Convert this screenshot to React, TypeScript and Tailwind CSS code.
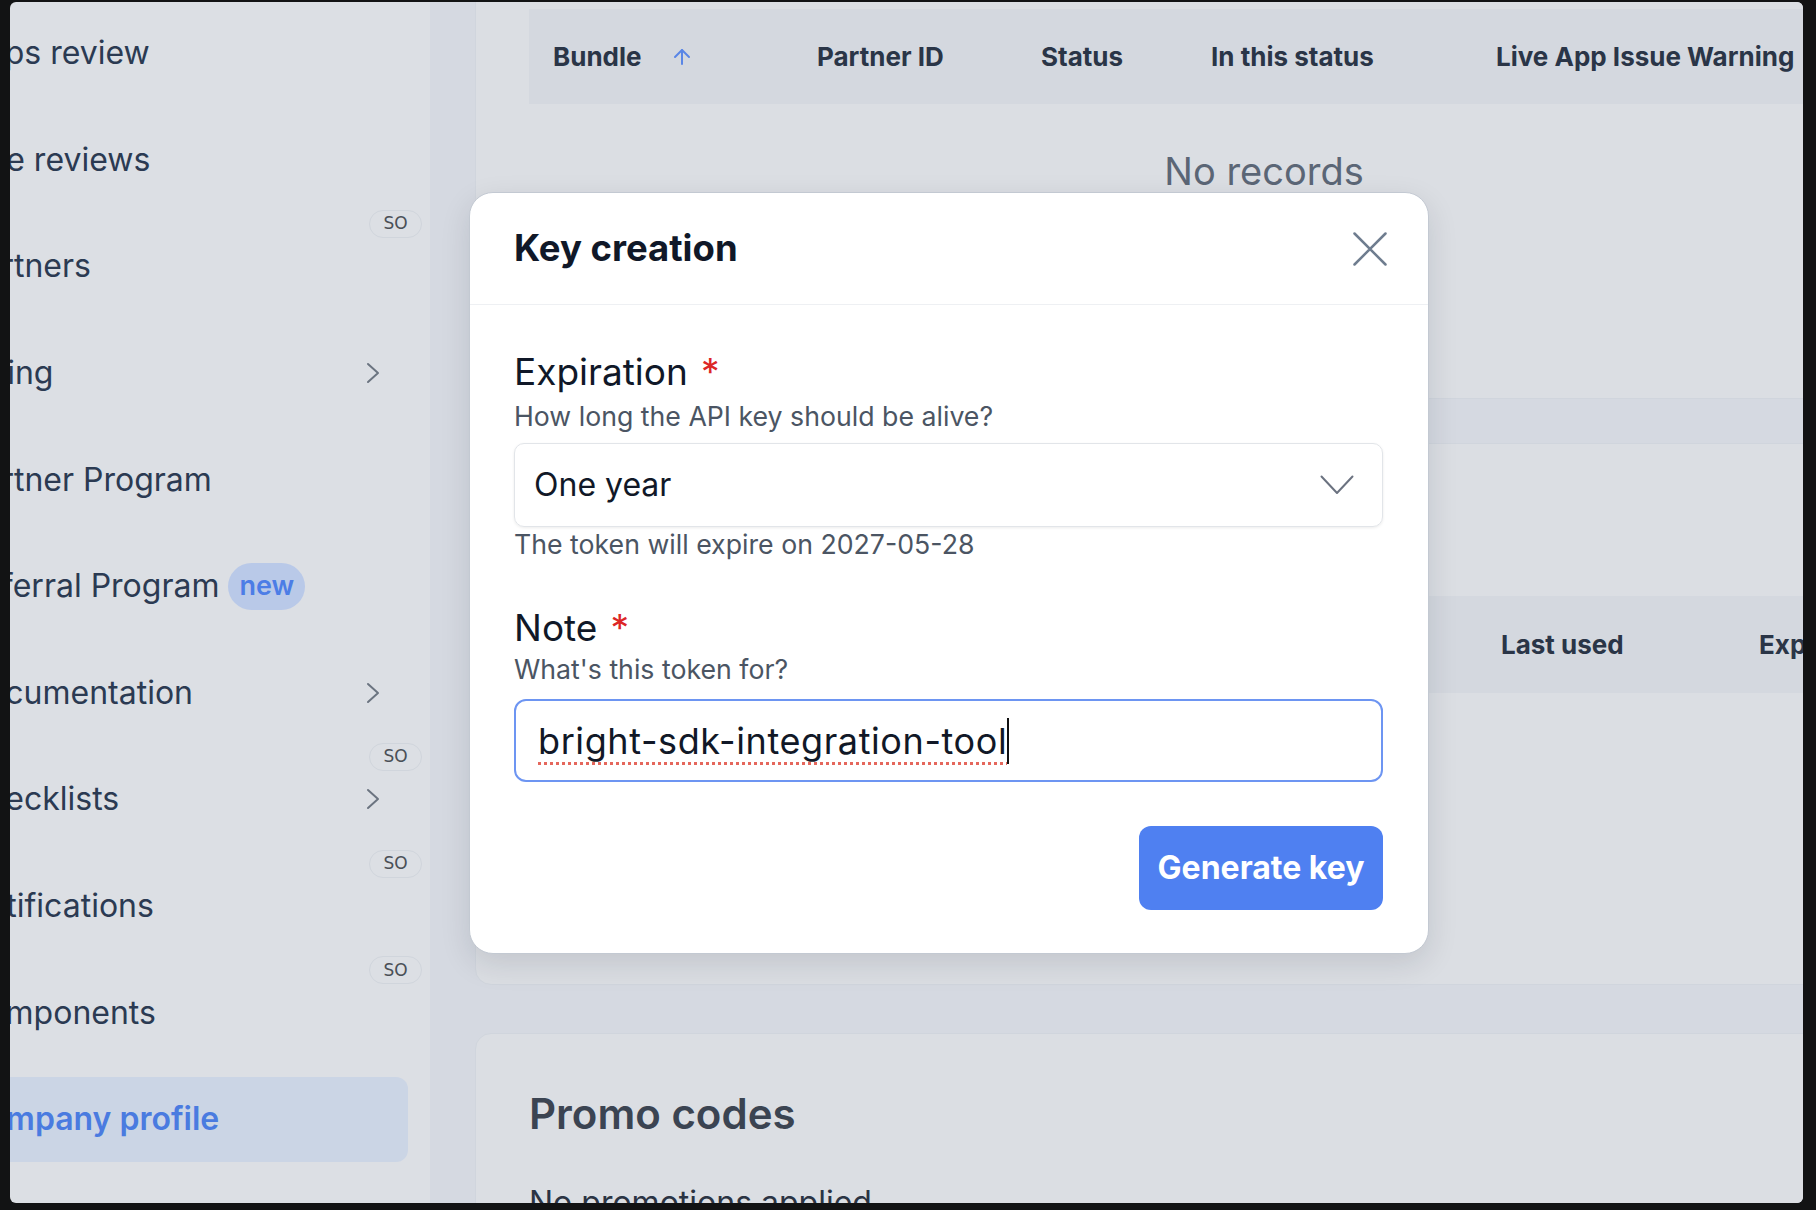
import { ArrowUp } from 'lucide-react'

const navItems = [
  { label: 'Apps review' },
  { label: 'Live reviews' },
  { label: 'Partners', soon: true },
  { label: 'Billing', chevron: true },
  { label: 'Partner Program' },
  { label: 'Referral Program', isNew: true },
  { label: 'Documentation', chevron: true },
  { label: 'Checklists', chevron: true, soon: true },
  { label: 'Notifications', soon: true },
  { label: 'Components', soon: true },
  { label: 'Company profile', active: true },
]

const bundleCols = [
  { label: 'Bundle', w: 'w-[264px]', sort: true },
  { label: 'Partner ID', w: 'w-[224px]' },
  { label: 'Status', w: 'w-[170px]' },
  { label: 'In this status', w: 'w-[285px]' },
  { label: 'Live App Issue Warning', w: 'w-[380px]' },
]

const keyCols = [
  { label: 'Note', w: 'w-[500px]' },
  { label: 'Created', w: 'w-[448px]' },
  { label: 'Last used', w: 'w-[258px]' },
  { label: 'Expires', w: 'w-[200px]' },
]

function Chevron() {
  return (
    <svg width="14" height="22" viewBox="0 0 14 22" className="ml-auto mr-[28px] shrink-0">
      <polyline points="2,2 12,11 2,20" fill="none" stroke="#6b7480" strokeWidth="2" strokeLinecap="round" strokeLinejoin="round" />
    </svg>
  )
}

function Sidebar() {
  return (
    <aside className="w-[420px] shrink-0 bg-[#dcdfe4] overflow-hidden">
      <div className="-mt-[2px]">
        {navItems.map((item) => (
          <div key={item.label} className="relative h-[106.6px] py-[11px] pr-[22px]">
            <div
              className={`h-full -ml-[47px] flex items-center rounded-[12px] ${
                item.active ? 'bg-[#cbd5e5] text-[#4a7be0] font-semibold' : 'text-[#2b3a52]'
              }`}
            >
              <span className="text-[32px] leading-none whitespace-nowrap">{item.label}</span>
              {item.isNew && (
                <span className="ml-[9px] h-[47px] px-[11px] flex items-center rounded-full bg-[#b9c9e8] text-[#4c7de6] text-[27px] font-semibold">
                  new
                </span>
              )}
              {item.chevron && <Chevron />}
            </div>
            {item.soon && (
              <span className="absolute top-[-3px] right-[8px] w-[53px] h-[28px] flex items-center justify-center rounded-full border border-[#d0d5dc] text-[17px] text-[#4a4f57] font-['DejaVu_Sans',sans-serif]">
                SO
              </span>
            )}
          </div>
        ))}
      </div>
    </aside>
  )
}

function Modal() {
  return (
    <div className="absolute left-[459px] top-[190px] w-[960px] rounded-[24px] border border-[#c3c9d2] bg-white shadow-[0_10px_30px_rgba(15,23,42,0.12)]">
      <div className="h-[112px] pl-[44px] pr-[41px] flex items-center justify-between border-b border-[#eef0f3]">
        <h2 className="text-[36.5px] leading-none font-bold text-[#101828]">Key creation</h2>
        <svg width="34" height="34" viewBox="0 0 34 34">
          <path d="M1.5 1.5 L32.5 32.5 M32.5 1.5 L1.5 32.5" stroke="#6f7d8f" strokeWidth="2.5" strokeLinecap="round" />
        </svg>
      </div>
      <div className="pl-[44px] pr-[45px] pt-[45px] pb-[43px] flex flex-col">
        <div className="text-[37px] leading-[44px] text-[#101828]">
          Expiration<span className="ml-[13px] text-[#dc2626]">*</span>
        </div>
        <div className="mt-[6px] text-[26.7px] leading-[32px] text-[#4b5563]">How long the API key should be alive?</div>
        <div className="mt-[11px] h-[84px] rounded-[10px] border border-[#e2e5e9] shadow-[0_1px_3px_rgba(0,0,0,0.08)] pl-[19px] pr-[28px] flex items-center justify-between">
          <span className="text-[32px] text-[#111827]">One year</span>
          <svg width="34" height="20" viewBox="0 0 34 20">
            <polyline points="1.5,1.5 17,18 32.5,1.5" fill="none" stroke="#6b7280" strokeWidth="2" strokeLinecap="round" strokeLinejoin="round" />
          </svg>
        </div>
        <div className="mt-[1px] text-[26.7px] leading-[32px] text-[#4b5563]">The token will expire on 2027-05-28</div>
        <div className="mt-[46px] text-[37px] leading-[44px] text-[#101828]">
          Note<span className="ml-[13px] text-[#dc2626]">*</span>
        </div>
        <div className="mt-[3px] text-[26.7px] leading-[32px] text-[#4b5563]">What's this token for?</div>
        <div className="mt-[14px] h-[83px] rounded-[12px] border-2 border-[#6d95f2] pl-[22px] flex items-center">
          <span className="text-[36px] tracking-[0.6px] text-[#111827] underline decoration-dotted decoration-[#e5675c] decoration-[3px] underline-offset-[8px]">
            bright-sdk-integration-tool
          </span>
          <span className="w-[2px] h-[46px] bg-[#111]" />
        </div>
        <div className="mt-[44px] flex justify-end">
          <button className="w-[244px] h-[84px] rounded-[12px] bg-[#4f80f1] text-white text-[32px] font-bold">Generate key</button>
        </div>
      </div>
    </div>
  )
}

export default function App() {
  return (
    <div className="w-[1816px] h-[1210px] bg-[#121314] pl-[10px] pt-[2px] overflow-hidden font-['Inter',sans-serif]">
      <div className="relative w-[1793px] h-[1201px] rounded-[6px] overflow-hidden flex">
        <Sidebar />
        <main className="flex-1 bg-[#d5d9e1] pl-[45px] overflow-hidden">
          <div className="w-[1500px]">
            <section className="h-[397px] rounded-b-[16px] border border-t-0 border-[#d0d5dd] bg-[#dbdee3] pl-[53px] pt-[7px]">
              <div className="w-[1470px]">
                <div className="h-[95px] bg-[#d4d8df] pl-[24px] flex items-center">
                  {bundleCols.map((c) => (
                    <div key={c.label} className={`${c.w} shrink-0 flex items-center text-[26px] font-bold text-[#2a3547] whitespace-nowrap`}>
                      {c.label}
                      {c.sort && <ArrowUp className="ml-[28px] text-[#5a86e6]" size={24} strokeWidth={2} />}
                    </div>
                  ))}
                </div>
                <div className="mt-[44px] text-center text-[38px] leading-[46px] text-[#5b6676]">No records</div>
              </div>
            </section>
            <section className="mt-[44px] h-[542px] rounded-[16px] border border-[#d0d5dd] bg-[#dbdee3] pl-[53px] pt-[57px]">
              <h3 className="text-[40px] leading-[48px] font-semibold text-[#374151]">API keys</h3>
              <div className="mt-[47px] h-[97px] bg-[#d4d8df] pl-[24px] flex items-center">
                {keyCols.map((c) => (
                  <div key={c.label} className={`${c.w} shrink-0 text-[26px] font-bold text-[#2a3547] whitespace-nowrap`}>
                    {c.label}
                  </div>
                ))}
              </div>
            </section>
            <section className="mt-[48px] h-[400px] rounded-[16px] border border-[#d0d5dd] bg-[#dbdee3] pl-[53px] pt-[56px]">
              <h3 className="text-[42px] leading-[48px] font-semibold text-[#3b4452]">Promo codes</h3>
              <p className="mt-[46px] text-[32px] leading-[38px] text-[#2b3444]">No promotions applied</p>
            </section>
          </div>
        </main>
        <Modal />
      </div>
    </div>
  )
}
